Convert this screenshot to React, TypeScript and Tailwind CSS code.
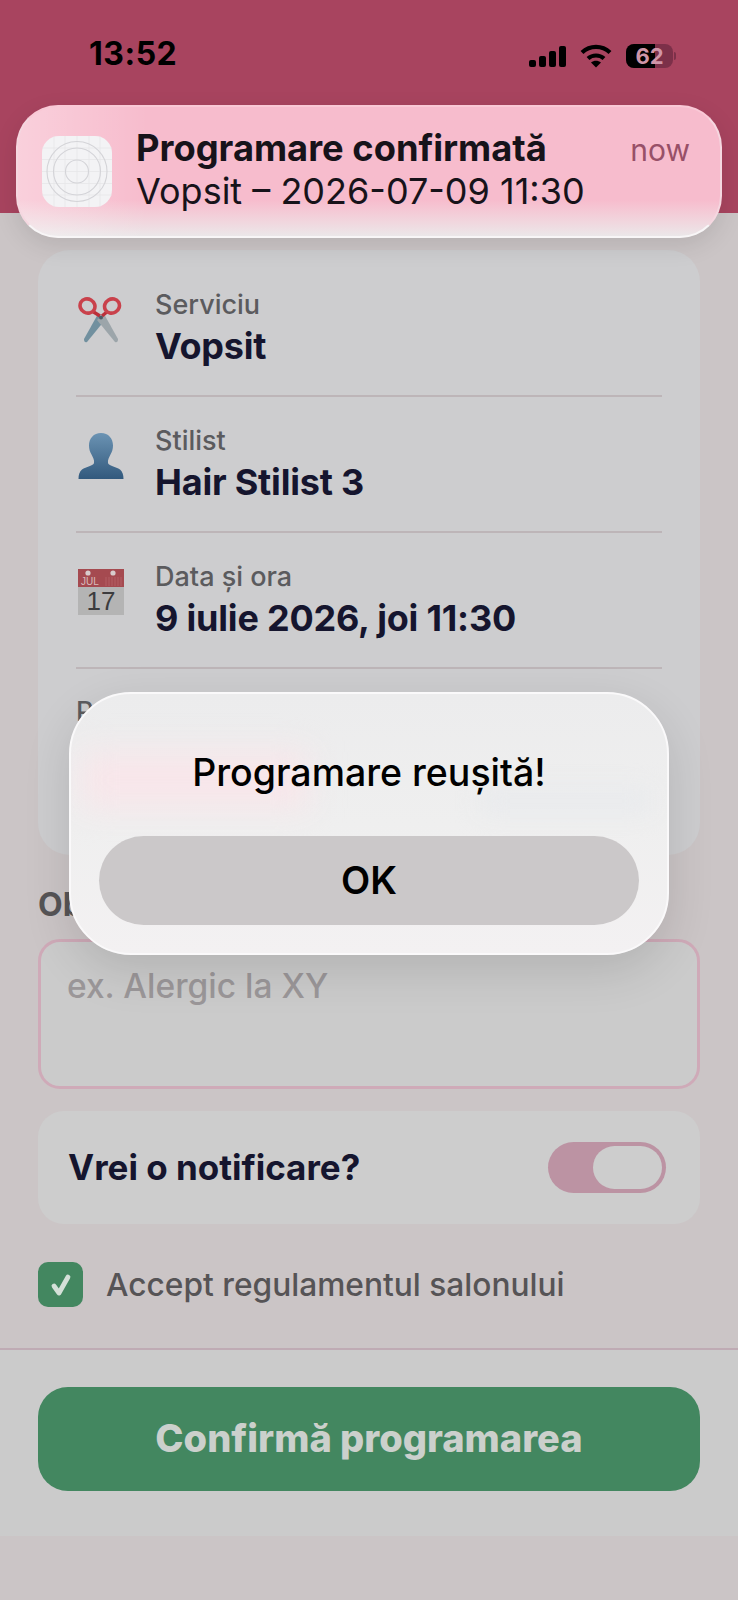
import React from "react";

function SignalIcon() {
  return (
    <svg width="37" height="21" viewBox="0 0 37 21" fill="#000">
      <rect x="0" y="14" width="7" height="7" rx="2" />
      <rect x="10" y="10" width="7" height="11" rx="2" />
      <rect x="20" y="5" width="7" height="16" rx="2" />
      <rect x="30" y="0" width="7" height="21" rx="2" />
    </svg>
  );
}

function WifiIcon() {
  return (
    <svg width="32" height="24" viewBox="0 0 32 24" fill="none" stroke="#000" strokeWidth="4.2">
      <path d="M2 8.5C10 1 22 1 30 8.5" />
      <path d="M8 14.5C12.5 10.5 19.5 10.5 24 14.5" />
      <path d="M16 23.5L11 18.5C14 16 18 16 21 18.5Z" fill="#000" stroke="none" />
    </svg>
  );
}

function Battery() {
  return (
    <div className="relative flex h-[24px] w-[50px] items-center">
      <div className="relative h-[24px] w-[47px] overflow-hidden rounded-[8px] bg-[#7c3049]">
        <div className="h-full w-[29px] bg-black" />
        <span className="absolute inset-0 flex items-center justify-center text-[22px] leading-none font-bold text-[#cf95a8]">
          62
        </span>
      </div>
      <div className="ml-[1px] h-[8px] w-[2px] rounded-r-sm bg-[#7c3049]" />
    </div>
  );
}

function ScissorsIcon() {
  return (
    <svg width="46" height="46" viewBox="0 0 46 46" fill="none">
      {/* blades */}
      <path d="M20 17L6 42Q6 46 9 45L27 23Z" fill="#71909f" />
      <path d="M26 17L40 42Q40 46 37 45L19 23Z" fill="#9ca5aa" />
      <path d="M22 19L14 14" stroke="#bb2f3a" strokeWidth="3.4" />
      <path d="M24 19L30 14" stroke="#bb2f3a" strokeWidth="3.4" />
      {/* handles */}
      <ellipse cx="9.5" cy="9" rx="7.6" ry="7" stroke="#c9414b" strokeWidth="3.6" transform="rotate(30 9.5 9)" />
      <ellipse cx="34" cy="9" rx="7.6" ry="7" stroke="#c9414b" strokeWidth="3.6" transform="rotate(-30 34 9)" />
      <circle cx="23" cy="20.5" r="2" fill="#4d5b66" />
    </svg>
  );
}

function BustIcon() {
  return (
    <svg width="46" height="46" viewBox="0 0 46 46">
      <defs>
        <linearGradient id="bustFill" x1="0" y1="0" x2="0" y2="1">
          <stop offset="0" stopColor="#6b93b3" />
          <stop offset="1" stopColor="#32597d" />
        </linearGradient>
      </defs>
      <path
        d="M23 0C15.5 0 11 5.5 11 12.5C11 16 12 19 13.5 21.5C15 24.5 16.5 27 16 30C15.5 33 8 33.5 4 36.5C1.5 38.5 0.5 42 0.5 46H45.5C45.5 42 44.5 38.5 42 36.5C38 33.5 30.5 33 30 30C29.5 27 31 24.5 32.5 21.5C34 19 35 16 35 12.5C35 5.5 30.5 0 23 0Z"
        fill="url(#bustFill)"
      />
    </svg>
  );
}

function CalendarIcon() {
  return (
    <svg width="46" height="46" viewBox="0 0 46 46">
      <rect width="46" height="46" fill="#b4b4b4" />
      <rect width="46" height="18" fill="#a54a50" />
      <circle cx="10" cy="4" r="2.6" fill="#d8cccc" />
      <circle cx="35" cy="4" r="2.6" fill="#d8cccc" />
      <path d="M28 8V17M31 8V17M34 8V17M37 8V17M40 8V17M43 8V17" stroke="#b8666b" strokeWidth="0.8" />
      <text x="3" y="16" fontFamily="Liberation Sans, sans-serif" fontSize="10" fill="#d8bcbc">
        JUL
      </text>
      <text x="23" y="41" textAnchor="middle" fontFamily="Liberation Sans, sans-serif" fontSize="26" fill="#3c3c3e">
        17
      </text>
    </svg>
  );
}

function AppPlaceholderIcon() {
  return (
    <svg width="70" height="71" viewBox="0 0 70 71" fill="none">
      <rect width="70" height="71" rx="17" fill="#f3f3f5" />
      <g stroke="#e6e6e9" strokeWidth="0.8">
        <path d="M0 12H70M0 23.5H70M0 35.5H70M0 47.5H70M0 59H70" />
        <path d="M12 0V71M23 0V71M35 0V71M47 0V71M58 0V71" />
      </g>
      <g stroke="#d4d4d8" strokeWidth="1.1">
        <circle cx="35" cy="35.5" r="30" />
        <circle cx="35" cy="35.5" r="23.5" />
        <circle cx="35" cy="35.5" r="11.5" />
      </g>
    </svg>
  );
}

function SummaryRow({ icon, label, value }: { icon: React.ReactNode; label: string; value: string }) {
  return (
    <div className="flex h-[136px] gap-[31px] border-b-2 border-[#bdb5b8] pt-[24px] pl-[2px]">
      <div className="pt-[12px]">{icon}</div>
      <div className="flex flex-col">
        <span className="text-[27px] leading-[39px] font-medium text-[#5b5b5e]">{label}</span>
        <span className="text-[36px] leading-[45px] font-bold tracking-[-0.2px] text-[#15152e]">{value}</span>
      </div>
    </div>
  );
}

export default function App() {
  return (
    <div
      className="relative h-[1600px] w-[738px] overflow-hidden bg-[#cbc5c6]"
      style={{ fontFamily: "Inter, 'Noto Sans', sans-serif" }}
    >
      {/* Header band with the status bar */}
      <div className="h-[213px] bg-[#a8445f]">
        <div className="flex items-start justify-between pt-[37px] pr-[62px] pl-[89px]">
          <span className="text-[32px] leading-[34px] font-bold tracking-[0.5px] text-black">13:52</span>
          <div className="flex items-center gap-[14px] pt-[7px]">
            <SignalIcon />
            <WifiIcon />
            <Battery />
          </div>
        </div>
      </div>

      <div className="px-[38px] pt-[37px]">
        {/* Booking summary */}
        <div className="h-[605px] rounded-[32px] bg-[#cdcdcf] px-[38px] pt-[11px]">
          <SummaryRow icon={<ScissorsIcon />} label="Serviciu" value="Vopsit" />
          <SummaryRow icon={<BustIcon />} label="Stilist" value="Hair Stilist 3" />
          <SummaryRow icon={<CalendarIcon />} label="Data și ora" value="9 iulie 2026, joi 11:30" />
          <div className="pt-[24px]">
            <span className="text-[27px] leading-[38px] font-medium text-[#5b5b5e]">Preț</span>
          </div>
        </div>

        <div className="mt-[31px] text-[32px] leading-[38px] font-bold text-[#565456]">Observații</div>

        <div className="mt-[15px] h-[150px] rounded-[22px] border-[3px] border-[#cfaab8] bg-[#cbcbcb] px-[26px] pt-[24px] text-[33.5px] leading-[40px] font-medium text-[#9b9799]">
          ex. Alergic la XY
        </div>

        <div className="mt-[22px] flex h-[113px] items-center justify-between rounded-[26px] bg-[#cdcdcd] pr-[34px] pl-[30px]">
          <span className="text-[35px] font-bold text-[#15152e]">Vrei o notificare?</span>
          <div className="flex h-[51px] w-[118px] items-center justify-end rounded-full bg-[#bc93a3] pr-[4px]">
            <div className="h-[43px] w-[69px] rounded-full bg-[#cdcdcd]" />
          </div>
        </div>

        <div className="mt-[37px] flex items-center gap-[23px]">
          <div className="flex h-[45px] w-[45px] items-center justify-center rounded-[10px] bg-[#438760]">
            <svg width="26" height="26" viewBox="0 0 26 26" fill="none" stroke="#d4e0d8" strokeWidth="4.8" strokeLinecap="round" strokeLinejoin="round">
              <path d="M6 14L11 21L20 5" />
            </svg>
          </div>
          <span className="text-[31.7px] font-medium text-[#565456]">Accept regulamentul salonului</span>
        </div>
      </div>

      <div className="mt-[39px] h-[188px] border-t-2 border-[#bfabb4] bg-[#cbcbcb] px-[38px] pt-[37px]">
        <div className="flex h-[104px] items-center justify-center rounded-[30px] bg-[#438760] text-[38px] font-extrabold text-[#cbd0cc]">
          Confirmă programarea
        </div>
      </div>

      {/* Banner notification */}
      <div className="absolute top-[105px] left-[16px] flex h-[133px] w-[706px] items-start overflow-hidden rounded-[42px] border-2 border-x-[#f5d7e0] border-t-[#f9c9d6] border-b-[#f8f6f7] bg-gradient-to-b from-[#f7bccd] from-72% to-[#ebe7e9] pt-[20px] pr-[30px] pl-[24px] shadow-[0_8px_24px_rgba(0,0,0,0.1)]">
        <div className="absolute inset-y-0 left-0 w-[130px] bg-gradient-to-r from-white/30 to-transparent" />
        <div className="relative mt-[9px]">
          <AppPlaceholderIcon />
        </div>
        <div className="relative ml-[24px] flex flex-1 flex-col text-[#17131a]">
          <span className="text-[36.3px] leading-[42px] font-bold">Programare confirmată</span>
          <span className="text-[36px] leading-[44px]">Vopsit – 2026-07-09 11:30</span>
        </div>
        <span className="relative pt-[3px] text-[30px] leading-[40px] text-[#985068]">now</span>
      </div>

      {/* Success alert, frosted look comes from the two soft tints */}
      <div className="absolute top-[692px] left-[69px] flex h-[263px] w-[600px] flex-col overflow-hidden rounded-[62px] border-2 border-[#faf9fa] bg-gradient-to-b from-[#ececed] via-[#efefef] to-[#f3f1f2] px-[28px] shadow-[0_16px_48px_rgba(0,0,0,0.12)]">
        <div className="absolute top-[58px] left-[10px] h-[56px] w-[228px] bg-[#f8e6ea] blur-lg" />
        <div className="absolute top-[96px] right-[16px] h-[22px] w-[170px] bg-[#e8eaed] blur-md" />
        <div className="relative flex h-[142px] items-center justify-center pt-[16px] text-[37.5px] font-medium text-black">
          Programare reușită!
        </div>
        <div className="relative flex h-[89px] items-center justify-center rounded-full bg-[#cbc8c9] text-[38px] font-semibold text-black">
          OK
        </div>
      </div>
    </div>
  );
}
